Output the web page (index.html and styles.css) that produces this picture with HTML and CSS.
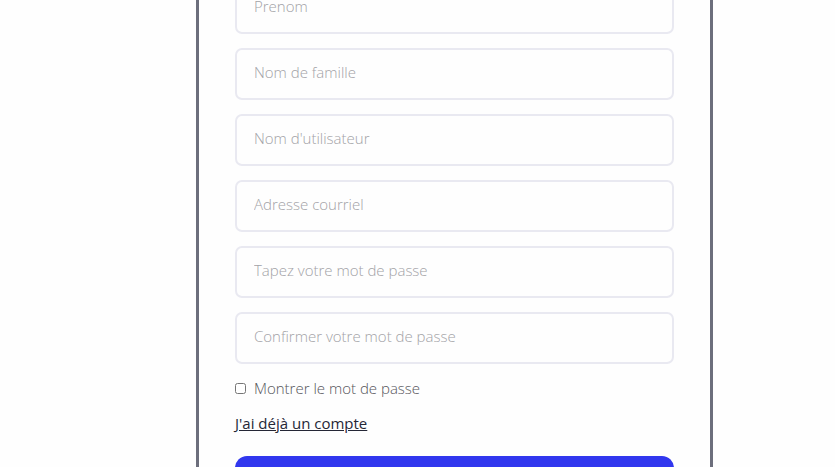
FILE: index.html
```html
<!DOCTYPE html>
<html lang="fr">
<head>
  <meta charset="UTF-8">
  <meta name="viewport" content="width=device-width, initial-scale=1.0">
  <title>Inscription</title>
  <link rel="stylesheet" href="styles.css">
</head>
<body>

<main class="page">
  <form class="signup-form">
    <input class="field" type="text" placeholder="Prenom" aria-label="Prenom">
    <input class="field" type="text" placeholder="Nom de famille" aria-label="Nom de famille">
    <input class="field" type="text" placeholder="Nom d'utilisateur" aria-label="Nom d'utilisateur">
    <input class="field" type="email" placeholder="Adresse courriel" aria-label="Adresse courriel">
    <input class="field" type="password" placeholder="Tapez votre mot de passe" aria-label="Tapez votre mot de passe">
    <input class="field" type="password" placeholder="Confirmer votre mot de passe" aria-label="Confirmer votre mot de passe">
    <div class="show-password">
      <input type="checkbox" id="showPassword">
      <label for="showPassword">Montrer le mot de passe</label>
    </div>
    <a class="login-link" href="#">J'ai déjà un compte</a>
    <button class="submit-button" type="submit" aria-label="Inscription"></button>
  </form>
</main>

</body>
</html>
```
FILE: styles.css
```css
* {
  box-sizing: border-box;
}
body {
  margin: 0;
  height: 100vh;
  overflow: hidden;
  background-color: #fefefe;
  font-family: "Open Sans", "Noto Sans", sans-serif;
}
.page {
  padding: 0 122px 0 196px;
}
.signup-form {
  display: flex;
  flex-direction: column;
  gap: 14px;
  margin-top: -18px;
  padding: 0 36px;
  border: 3px solid #6c6e7c;
  border-top: none;
}
.field {
  width: 100%;
  height: 52px;
  padding: 0 17px 4px;
  border: 2px solid #e9e9f1;
  border-radius: 7px;
  background-color: #fefefe;
  font-family: inherit;
  font-size: 15px;
  font-weight: 300;
  color: #333;
}
.field::placeholder {
  color: #a2a2a6;
}
.show-password {
  display: flex;
  align-items: center;
  gap: 8px;
  line-height: 20px;
  font-size: 15px;
  font-weight: 300;
  color: #55555a;
}
.show-password input {
  width: 11px;
  height: 11px;
  margin: 0;
}
.login-link {
  align-self: flex-start;
  line-height: 22px;
  font-size: 15px;
  font-weight: 500;
  color: #252736;
  text-decoration: underline;
}
.submit-button {
  height: 52px;
  margin-top: 8px;
  border: none;
  border-radius: 12px;
  background-color: #3137ee;
}
```
